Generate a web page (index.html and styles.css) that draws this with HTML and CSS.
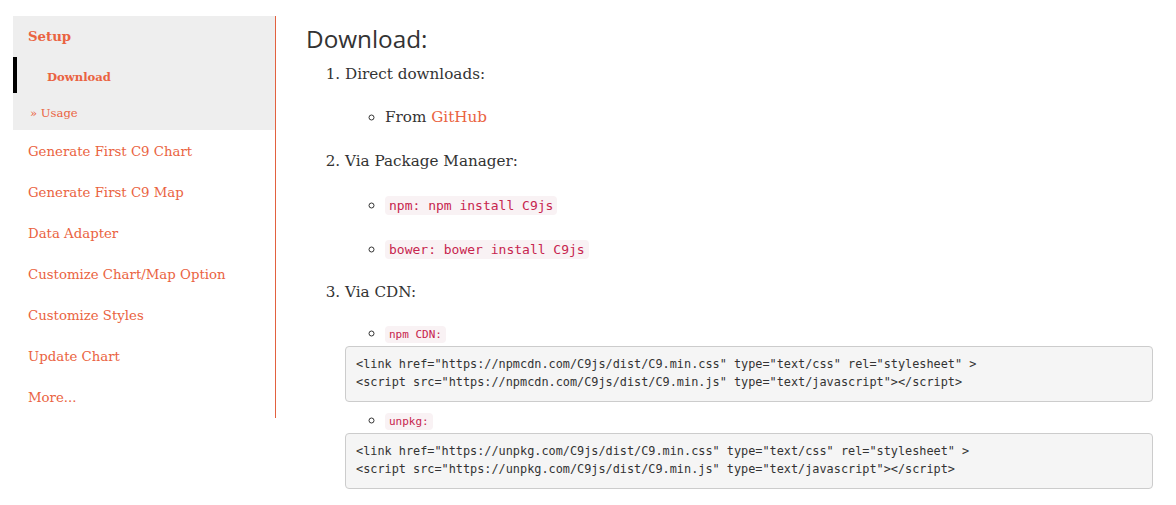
FILE: index.html
```html
<!DOCTYPE html>
<html lang="en">
<head>
<meta charset="utf-8">
<title>C9 Setup</title>
<link rel="stylesheet" href="styles.css">
</head>
<body>
<div class="page">
  <nav class="sidebar">
    <div class="setup">
      <a class="setup-title" href="#">Setup</a>
      <a class="sub-active" href="#">Download</a>
      <a class="sub-link" href="#">» Usage</a>
    </div>
    <a class="nav-link" href="#">Generate First C9 Chart</a>
    <a class="nav-link" href="#">Generate First C9 Map</a>
    <a class="nav-link" href="#">Data Adapter</a>
    <a class="nav-link" href="#">Customize Chart/Map Option</a>
    <a class="nav-link" href="#">Customize Styles</a>
    <a class="nav-link" href="#">Update Chart</a>
    <a class="nav-link" href="#">More...</a>
  </nav>
  <main class="content">
    <h2 class="title">Download:</h2>
    <ol class="steps">
      <li class="step">
        <div class="step-text first">Direct downloads:</div>
        <ul class="subs">
          <li class="sub sub-from">From <a href="#" class="link">GitHub</a></li>
        </ul>
      </li>
      <li class="step">
        <div class="step-text second">Via Package Manager:</div>
        <ul class="subs">
          <li class="sub sub-npm"><code class="chip">npm: npm install C9js</code></li>
          <li class="sub sub-bower"><code class="chip">bower: bower install C9js</code></li>
        </ul>
      </li>
      <li class="step">
        <div class="step-text third">Via CDN:</div>
        <ul class="subs">
          <li class="sub cdn cdn-npm"><code class="chip small">npm CDN:</code></li>
        </ul>
        <pre class="codeblock">&lt;link href="https://npmcdn.com/C9js/dist/C9.min.css" type="text/css" rel="stylesheet" &gt;
&lt;script src="https://npmcdn.com/C9js/dist/C9.min.js" type="text/javascript"&gt;&lt;/script&gt;</pre>
        <ul class="subs">
          <li class="sub cdn cdn-unpkg"><code class="chip small">unpkg:</code></li>
        </ul>
        <pre class="codeblock">&lt;link href="https://unpkg.com/C9js/dist/C9.min.css" type="text/css" rel="stylesheet" &gt;
&lt;script src="https://unpkg.com/C9js/dist/C9.min.js" type="text/javascript"&gt;&lt;/script&gt;</pre>
      </li>
    </ol>
  </main>
</div>
</body>
</html>
```

FILE: styles.css
```css
* { box-sizing: border-box; }
html, body { margin: 0; padding: 0; background: #fff; }
body {
  font-family: "DejaVu Serif", "Liberation Serif", serif;
  color: #333;
}
a { text-decoration: none; color: #ea6341; }

.page {
  display: flex;
  padding: 16px 23px 0 13px;
  gap: 30px;
}

.sidebar {
  flex: 0 0 263px;
  height: 402px;
  border-right: 1px solid #e2613f;
  display: flex;
  flex-direction: column;
}
.setup {
  background: #eeeeee;
  height: 114px;
  display: flex;
  flex-direction: column;
}
.setup-title {
  font-weight: bold;
  font-size: 13.3px;
  line-height: 20px;
  padding: 11px 0 0 15px;
  height: 41px;
}
.sub-active {
  font-weight: bold;
  font-size: 11.6px;
  line-height: 36px;
  height: 36px;
  padding: 2px 0 0 30px;
  border-left: 4px solid #000;
}
.sub-link {
  font-size: 11.6px;
  line-height: 20px;
  padding: 10px 0 0 17px;
}
.nav-link {
  font-size: 13.3px;
  line-height: 41px;
  height: 41px;
  padding: 1px 0 0 15px;
}

.content { flex: 1; }
.title {
  font-family: "Open Sans", "Liberation Sans", sans-serif;
  font-weight: 500;
  font-size: 24.3px;
  line-height: 30px;
  margin: 8px 0 0 0;
  color: #333;
}
.steps {
  margin: 0;
  padding-left: 39px;
  font-size: 15.2px;
}
.step-text { line-height: 24px; }
.first { margin-top: 8px; }
.second { margin-top: 20px; }
.third { margin-top: 18px; }

.subs {
  list-style: circle;
  margin: 0;
  padding-left: 40px;
}
.sub { line-height: 24px; }
.sub-from { margin-top: 19px; }
.sub-npm { margin-top: 20px; }
.sub-bower { margin-top: 19px; }
.cdn { line-height: 22px; }
.cdn-npm { margin-top: 18px; }
.cdn-unpkg { margin-top: 7px; }

.chip {
  font-family: "DejaVu Sans Mono", "Liberation Mono", monospace;
  font-size: 13px;
  color: #c7254e;
  background: #f9f2f4;
  padding: 2px 4px;
  border-radius: 4px;
}
.chip.small { font-size: 11px; }

.codeblock {
  margin: 0;
  background: #f5f5f5;
  border: 1px solid #ccc;
  border-radius: 4px;
  padding: 8px 10px 10px;
  font-family: "DejaVu Sans Mono", "Liberation Mono", monospace;
  font-size: 11.85px;
  line-height: 18px;
  color: #333;
  white-space: pre;
  overflow: hidden;
}
```
